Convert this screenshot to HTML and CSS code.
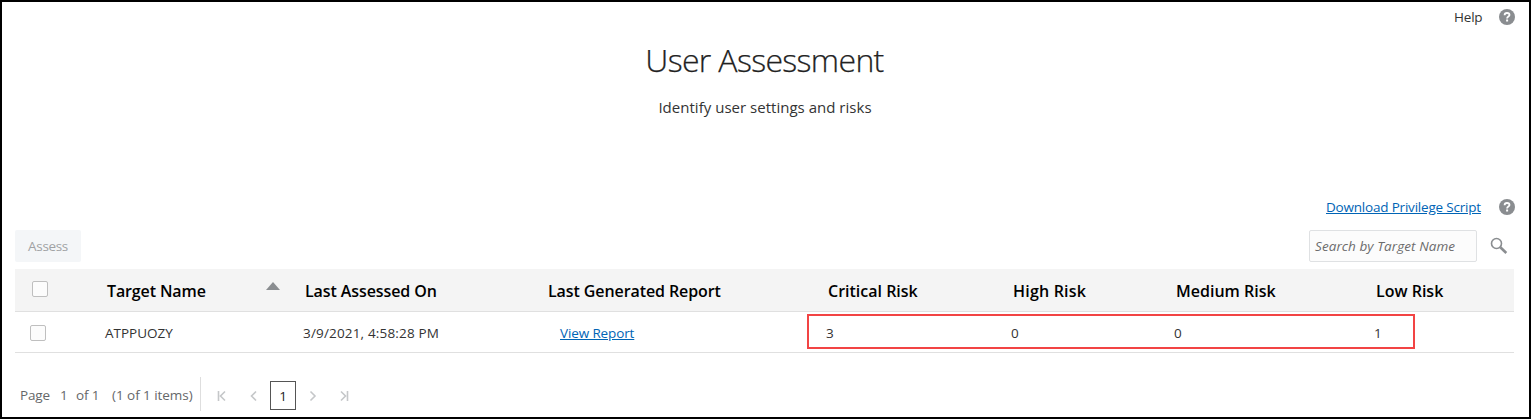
FILE: index.html
```html
<!DOCTYPE html>
<html lang="en">
<head>
<meta charset="utf-8">
<title>User Assessment</title>
<link rel="stylesheet" href="styles.css">
</head>
<body>
<div class="page">
  <header class="topbar">
    <span class="help-label">Help</span>
    <svg class="help-icon" viewBox="0 0 16 16"><circle cx="8" cy="8" r="8" fill="#8a8d90"/><path d="M5.6 6.3C5.6 4.7 6.6 4 8 4s2.500.8 2.500 2.100C10.500 7.500 8.100 7.700 8.100 9.400" fill="none" stroke="#fff" stroke-width="1.8"/><rect x="7.1" y="10.500" width="2" height="2" fill="#fff"/></svg>
  </header>
  <h1 class="title">User Assessment</h1>
  <p class="subtitle">Identify user settings and risks</p>
  <div class="script-row">
    <a class="link script-link"><span class="script-text">Download Privilege Script</span></a>
    <svg class="help-icon" viewBox="0 0 16 16"><circle cx="8" cy="8" r="8" fill="#8a8d90"/><path d="M5.6 6.3C5.6 4.7 6.6 4 8 4s2.500.8 2.500 2.100C10.500 7.500 8.100 7.700 8.100 9.400" fill="none" stroke="#fff" stroke-width="1.8"/><rect x="7.1" y="10.500" width="2" height="2" fill="#fff"/></svg>
  </div>
  <div class="toolbar">
    <button class="assess" disabled>Assess</button>
    <div class="search">Search by Target Name</div>
    <svg class="search-icon" viewBox="0 0 18 18"><circle cx="6.500" cy="6.500" r="5" fill="none" stroke="#8a8d90" stroke-width="1.600"/><path d="M10.300 10.300L16.300 16" stroke="#8a8d90" stroke-width="2.600"/></svg>
  </div>
  <div class="table">
    <div class="row head">
      <div class="cell check"><i class="box"></i></div>
      <div class="cell target"><span class="target-label">Target Name</span><i class="sort"></i></div>
      <div class="cell assessed">Last Assessed On</div>
      <div class="cell generated">Last Generated Report</div>
      <div class="cell">Critical Risk</div>
      <div class="cell high">High Risk</div>
      <div class="cell">Medium Risk</div>
      <div class="cell">Low Risk</div>
    </div>
    <div class="row data">
      <div class="cell check"><i class="box"></i></div>
      <div class="cell">ATPPUOZY</div>
      <div class="cell date">3/9/2021, 4:58:28 PM</div>
      <div class="cell report"><a class="link view">View Report</a></div>
      <div class="cell">3</div>
      <div class="cell">0</div>
      <div class="cell">0</div>
      <div class="cell">1</div>
      <div class="highlight"></div>
    </div>
  </div>
  <footer class="pager">
    <div class="summary"><span class="page-word">Page</span><span class="page-number">1</span><span class="page-total">of 1</span><span class="item-range">(1 of 1 items)</span></div>
    <svg class="nav" viewBox="0 0 10 12"><path d="M1.500 1v10M8 1.500L3.500 6L8 10.500"/></svg>
    <svg class="nav prev" viewBox="0 0 10 12"><path d="M7 1.500L2.500 6L7 10.500"/></svg>
    <span class="current">1</span>
    <svg class="nav next" viewBox="0 0 10 12"><path d="M2.500 1.500L7 6L2.500 10.500"/></svg>
    <svg class="nav last" viewBox="0 0 10 12"><path d="M8.500 1v10M2 1.500L6.500 6L2 10.500"/></svg>
  </footer>
</div>
</body>
</html>
```

FILE: styles.css
```css
* { box-sizing: border-box; }
body { margin: 0; background: #fff; color: #333; font: 13.5px/20px "Open Sans", "Noto Sans", sans-serif; white-space: nowrap; }
.page { width: 1531px; height: 419px; border: 2px solid #000; padding: 0 15px 0 13px; display: flex; flex-direction: column; overflow: hidden; }
.topbar { height: 30px; display: flex; justify-content: flex-end; align-items: center; }
.help-label { width: 45px; letter-spacing: -.2px; }
.help-icon { width: 16px; height: 16px; margin-right: -1px; flex: none; }
.title { margin: 7px 0 0; height: 42px; font-size: 32px; line-height: 42px; font-weight: 300; color: #222; text-align: center; letter-spacing: -.65px; -webkit-text-stroke: .25px #222; }
.subtitle { margin: 16px 0 0; height: 20px; font-size: 15px; text-align: center; letter-spacing: .02px; padding-left: 1px; }
.script-row { margin-top: 80px; height: 20px; display: flex; justify-content: flex-end; align-items: center; }
.link { color: #0064b5; text-decoration: underline; }
.script-link { width: 173px; }
.script-text { letter-spacing: -.2px; }
.toolbar { margin-top: 13px; height: 32px; display: flex; align-items: center; }
.assess { width: 66px; height: 32px; padding: 0; border: 0; border-radius: 2px; background: #f4f6f8; color: #a0a2a4; font: inherit; letter-spacing: -.35px; }
.search { width: 168px; height: 32px; margin-left: auto; padding: 5px; border: 1px solid #dfe1e3; border-radius: 2px; background: #fcfcfc; color: #6c6c6c; font-style: italic; letter-spacing: .08px; }
.search-icon { width: 18px; height: 18px; margin: 0 6px 0 13px; }
.table { margin-top: 7px; width: 1499px; }
.row { display: grid; grid-template-columns: 82px 198px 243px 280px 185px 163px 200px 148px; align-items: center; border-bottom: 1px solid #e0e0e0; }
.head { height: 43px; background: #f4f4f4; color: #000; font-size: 16px; font-weight: 600; }
.data { height: 41px; position: relative; }
.cell { padding-left: 10px; }
.head .cell { padding-top: 2px; }
.data .cell { padding-left: 8px; padding-top: 2px; }
.data .report { padding-left: 22px; }
.head .check { padding: 0 0 2px 17px; }
.data .check { padding: 2px 0 0 15px; }
.box { display: block; width: 16px; height: 16px; border: 1px solid #bfbfbf; border-radius: 2px; background: #fcfcfc; }
.target { display: flex; justify-content: space-between; padding-right: 15px; }
.target-label { letter-spacing: -.12px; }
.assessed, .generated { letter-spacing: -.09px; }
.high { letter-spacing: .2px; }
.date { letter-spacing: .17px; }
.view { letter-spacing: -.12px; }
.sort { width: 14px; height: 8px; margin-top: 1px; background: #8a8d90; clip-path: polygon(50% 0, 100% 100%, 0 100%); }
.highlight { position: absolute; left: 792px; top: 2px; width: 608px; height: 35px; border: 2px solid #f24444; }
.pager { margin-top: 24px; height: 34px; display: flex; align-items: center; color: #656769; }
.summary { width: 186px; height: 34px; padding: 8px 0 0 5px; border-right: 1px solid #dedede; display: flex; }
.page-word { width: 40px; letter-spacing: -.15px; }
.page-number { width: 16px; }
.page-total { width: 36px; letter-spacing: -.1px; }
.item-range { letter-spacing: -.05px; }
.nav { width: 10px; height: 12px; margin: 3px 0 0 16px; fill: none; stroke: #c5c7c9; stroke-width: 1.600; }
.prev { margin-left: 22px; }
.current { width: 26px; height: 29px; margin: 3px 0 0 11px; border: 1px solid #555; color: #222; line-height: 28px; text-align: center; }
.next { margin-left: 12px; }
.last { margin-left: 21px; }
```
